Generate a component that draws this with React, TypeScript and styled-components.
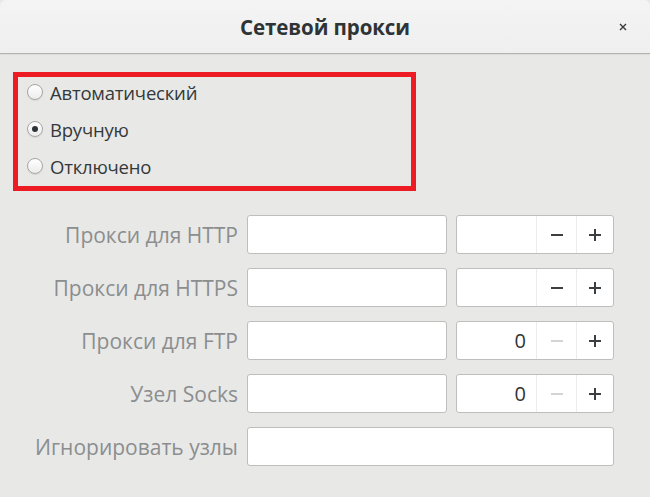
import React from "react";
import styled, { createGlobalStyle } from "styled-components";

const Global = createGlobalStyle`
  html, body { margin: 0; padding: 0; background: #e8e8e7; }
  body { font-family: "Open Sans", "Noto Sans", "DejaVu Sans", sans-serif; }
  * { box-sizing: border-box; }
`;

const Window = styled.div`
  width: 650px;
  height: 497px;
  background: #e8e8e7;
  display: flex;
  flex-direction: column;
`;

const TitleBar = styled.div`
  height: 54px;
  flex: none;
  background: linear-gradient(#f4f4f4, #efefef);
  border-bottom: 1px solid #b3b3b0;
  border-radius: 6px 6px 0 0;
  box-shadow: 0 1px 1px rgba(0,0,0,0.06);
  display: grid;
  grid-template-columns: 1fr auto 1fr;
  align-items: center;
`;

const Title = styled.div`
  grid-column: 2;
  font-weight: 700;
  font-size: 20.5px;
  color: #2e3436;
  letter-spacing: -0.1px;
`;

const CloseBtn = styled.div`
  grid-column: 3;
  justify-self: end;
  margin-right: 22px;
  width: 10px;
  height: 10px;
  display: flex;
  align-items: center;
  justify-content: center;
`;

const Body = styled.div`
  padding: 18px 0 0 13px;
  display: flex;
  flex-direction: column;
`;

const ModeBox = styled.div`
  width: 403px;
  height: 119px;
  border: 5px solid #ed1c24;
  padding: 0 0 5px 9px;
  display: flex;
  flex-direction: column;
  gap: 7px;
`;

const RadioRow = styled.label`
  height: 30px;
  display: flex;
  align-items: center;
  gap: 7px;
  font-size: 18.5px;
  color: #33393b;
  letter-spacing: -0.2px;
`;

const RadioCircle = styled.span<{ $checked?: boolean }>`
  width: 16px;
  height: 16px;
  border-radius: 50%;
  border: 1px solid #a6a6a4;
  background: linear-gradient(#ffffff, #ececec);
  box-shadow: 0 1px 1px rgba(0,0,0,0.08);
  display: flex;
  align-items: center;
  justify-content: center;
  flex: none;
  &::after {
    content: "";
    width: 6px;
    height: 6px;
    border-radius: 50%;
    background: #2e3436;
    display: ${(p) => (p.$checked ? "block" : "none")};
  }
`;

const Form = styled.div`
  margin-top: 24px;
  margin-left: -13px;
  display: grid;
  grid-template-columns: 238px 200px 158px;
  grid-auto-rows: 39px;
  column-gap: 9px;
  row-gap: 14px;
  align-items: stretch;
`;

const FieldLabel = styled.div`
  display: flex;
  align-items: center;
  justify-content: flex-end;
  font-size: 21px;
  color: #8b8e8f;
  white-space: nowrap;
`;

const Entry = styled.div<{ $wide?: boolean }>`
  background: #ffffff;
  border: 1px solid #bebebc;
  border-radius: 3px;
  grid-column: ${(p) => (p.$wide ? "2 / 4" : "auto")};
`;

const Spin = styled.div`
  background: #ffffff;
  border: 1px solid #bebebc;
  border-radius: 3px;
  display: grid;
  grid-template-columns: 79px 40px 1fr;
`;

const SpinValue = styled.div`
  display: flex;
  align-items: center;
  justify-content: flex-end;
  padding-right: 10px;
  font-size: 20px;
  color: #2e3436;
`;

const SpinButton = styled.div`
  border-left: 1px solid #ececec;
  display: flex;
  align-items: center;
  justify-content: center;
`;

const Minus = ({ disabled }: { disabled?: boolean }) => (
  <svg width="12" height="12" viewBox="0 0 12 12">
    <rect x="0" y="5" width="12" height="2" fill={disabled ? "#d3d4d4" : "#3b3f41"} />
  </svg>
);

const Plus = () => (
  <svg width="12" height="12" viewBox="0 0 12 12">
    <rect x="0" y="5" width="12" height="2" fill="#3b3f41" />
    <rect x="5" y="0" width="2" height="12" fill="#3b3f41" />
  </svg>
);

type Row = { label: string; value?: string };

const rows: Row[] = [
  { label: "Прокси для HTTP" },
  { label: "Прокси для HTTPS" },
  { label: "Прокси для FTP", value: "0" },
  { label: "Узел Socks", value: "0" },
];

export default function App() {
  return (
    <>
      <Global />
      <Window>
        <TitleBar>
          <Title>Сетевой прокси</Title>
          <CloseBtn>
            <svg width="8" height="8" viewBox="0 0 8 8">
              <path d="M1 1L7 7M7 1L1 7" stroke="#3a3a3a" strokeWidth="1.4" />
            </svg>
          </CloseBtn>
        </TitleBar>
        <Body>
          <ModeBox>
            <RadioRow>
              <RadioCircle />
              Автоматический
            </RadioRow>
            <RadioRow>
              <RadioCircle $checked />
              Вручную
            </RadioRow>
            <RadioRow>
              <RadioCircle />
              Отключено
            </RadioRow>
          </ModeBox>
          <Form>
            {rows.map((r) => (
              <React.Fragment key={r.label}>
                <FieldLabel>{r.label}</FieldLabel>
                <Entry />
                <Spin>
                  <SpinValue>{r.value ?? ""}</SpinValue>
                  <SpinButton>
                    <Minus disabled={r.value === "0"} />
                  </SpinButton>
                  <SpinButton>
                    <Plus />
                  </SpinButton>
                </Spin>
              </React.Fragment>
            ))}
            <FieldLabel>Игнорировать узлы</FieldLabel>
            <Entry $wide />
          </Form>
        </Body>
      </Window>
    </>
  );
}
